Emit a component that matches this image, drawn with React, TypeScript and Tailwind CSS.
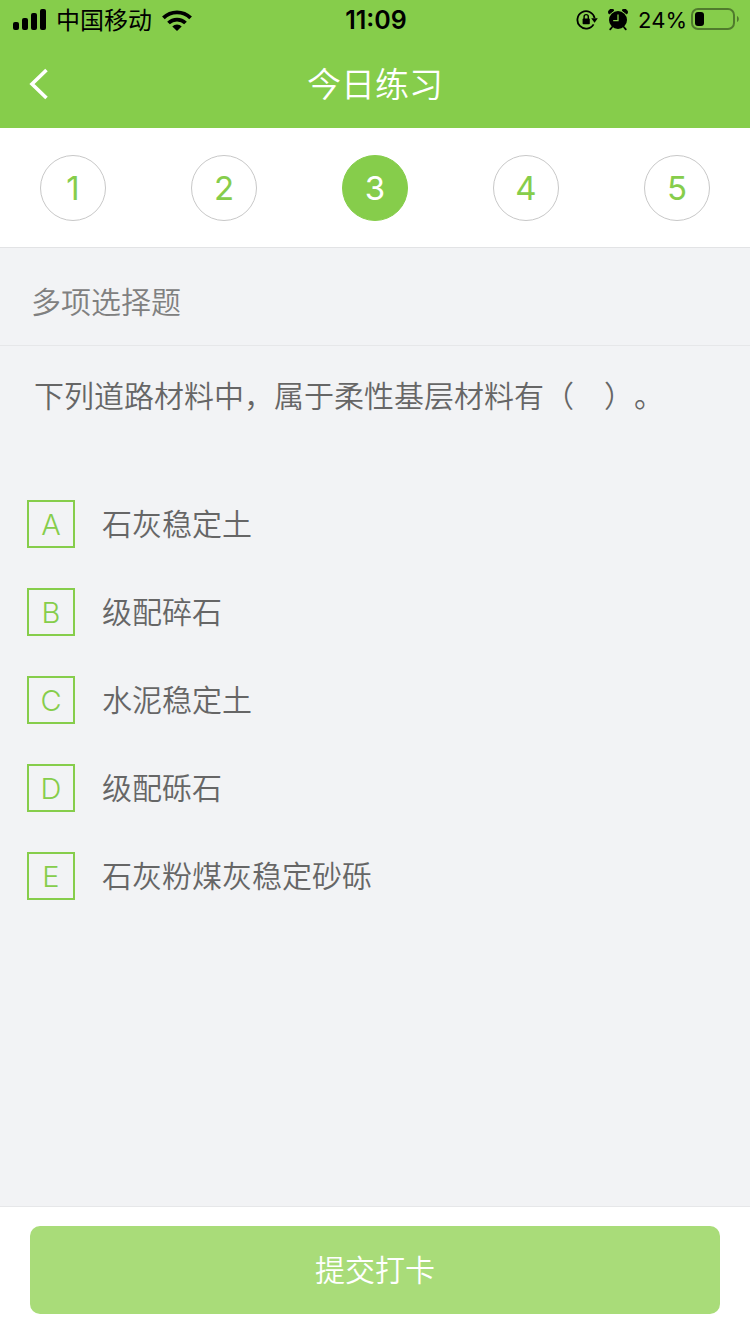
import React from 'react'
import clsx from 'clsx'

type Option = {
  key: string
  label: string
}

const questions = [1, 2, 3, 4, 5]

const options: Option[] = [
  { key: 'A', label: '石灰稳定土' },
  { key: 'B', label: '级配碎石' },
  { key: 'C', label: '水泥稳定土' },
  { key: 'D', label: '级配砾石' },
  { key: 'E', label: '石灰粉煤灰稳定砂砾' },
]

function SignalIcon() {
  return (
    <svg className="h-6 w-[33px]" viewBox="0 0 33 24" fill="currentColor" aria-hidden="true">
      <rect x="0" y="13" width="6" height="8" rx="2" />
      <rect x="9" y="9" width="6" height="12" rx="2" />
      <rect x="18" y="4" width="6" height="17" rx="2" />
      <rect x="27" y="0" width="6" height="21" rx="2" />
    </svg>
  )
}

function WifiIcon() {
  return (
    <svg className="h-[22px] w-[30px]" viewBox="0 0 30 22" fill="none" stroke="currentColor" strokeWidth="3.8" aria-hidden="true">
      <path d="M1.4 7.9a19.4 19.4 0 0 1 27.2 0" />
      <path d="M6.5 13a12.2 12.2 0 0 1 17 0" />
      <path d="M15 21.1l-4.7-4.7a6.8 6.8 0 0 1 9.4 0z" fill="currentColor" stroke="none" />
    </svg>
  )
}

function RotationLockIcon() {
  return (
    <svg className="h-[22px] w-[22px]" viewBox="0 0 22 22" fill="none" stroke="currentColor" aria-hidden="true">
      <path d="M17.6 15.4A8.7 8.7 0 1 1 18.6 9" strokeWidth="1.8" />
      <path d="M15.2 9.2h6.6l-3.2 4.6z" fill="currentColor" stroke="none" />
      <rect x="6.6" y="9.6" width="7.2" height="5.6" rx="0.8" fill="currentColor" stroke="none" />
      <path d="M8.1 10V7.7a2.1 2.1 0 0 1 4.2 0V10" strokeWidth="1.4" />
    </svg>
  )
}

function AlarmIcon() {
  return (
    <svg className="h-[22px] w-5" viewBox="0 0 20 22" fill="none" stroke="currentColor" aria-hidden="true">
      <circle cx="10" cy="11" r="9" fill="currentColor" stroke="none" />
      <path d="M1.2 5a3 3 0 0 1 4.8-3.7zM18.8 5a3 3 0 0 0-4.8-3.7z" fill="currentColor" strokeWidth="1" />
      <path d="M4 18.2l-1.8 2.2M16 18.2l1.8 2.2" strokeWidth="1.8" strokeLinecap="round" />
      <path d="M10 5.4v6.2H5.2" stroke="#86cd4b" strokeWidth="1.3" />
    </svg>
  )
}

function BatteryIcon() {
  return (
    <svg className="h-6 w-12" viewBox="0 0 48 24" fill="none" aria-hidden="true">
      <rect x="1" y="1" width="42" height="20" rx="6" stroke="#000" strokeOpacity="0.4" strokeWidth="2" />
      <rect x="4" y="4" width="9" height="14" rx="3" fill="#000" />
      <path d="M46 8c2.4.8 2.4 5.2 0 6z" fill="#000" fillOpacity="0.4" />
    </svg>
  )
}

function StatusBar() {
  return (
    <div className="grid h-10 grid-cols-[1fr_auto_1fr] items-center pt-px pl-[13px] pr-[11px] text-2xl text-black">
      <div className="flex items-center gap-2.5">
        <SignalIcon />
        <span>中国移动</span>
        <WifiIcon />
      </div>
      <span className="text-[25px] font-semibold">11:09</span>
      <div className="flex items-center justify-end">
        <RotationLockIcon />
        <span className="mx-2.5">
          <AlarmIcon />
        </span>
        <span className="mr-1 text-[22px]">24%</span>
        <BatteryIcon />
      </div>
    </div>
  )
}

export default function App() {
  const [current, setCurrent] = React.useState(3)
  const [picked, setPicked] = React.useState<string[]>([])

  const toggle = (key: string) => {
    setPicked((prev) => (prev.includes(key) ? prev.filter((k) => k !== key) : [...prev, key]))
  }

  return (
    <div className="flex min-h-screen flex-col bg-[#f2f3f5] font-[Inter,'Noto_Sans_CJK_SC',sans-serif] text-[#666] [text-spacing-trim:space-all]">
      <header className="bg-[#86cd4b]">
        <StatusBar />
        <div className="grid h-22 grid-cols-[1fr_auto_1fr] items-center px-7 text-white">
          <button type="button" aria-label="返回" className="w-fit">
            <svg className="h-8 w-6" viewBox="0 0 24 32" fill="none" stroke="currentColor" strokeWidth="3.6" aria-hidden="true">
              <path d="M18.5 2L4 16l14.5 14" />
            </svg>
          </button>
          <h1 className="text-[34px] font-[350]">今日练习</h1>
        </div>
      </header>

      <nav className="flex h-30 items-center justify-between border-b border-[#e2e3e5] bg-white px-10">
        {questions.map((n) => (
          <button
            key={n}
            type="button"
            onClick={() => setCurrent(n)}
            aria-current={n === current ? 'step' : undefined}
            className={clsx(
              'h-[66px] w-[66px] rounded-full border pt-0.5 text-[33px]',
              n === current ? 'border-[#86cd4b] bg-[#86cd4b] text-white' : 'border-[#c8c8c8] bg-white text-[#86cd4b]',
            )}
          >
            {n}
          </button>
        ))}
      </nav>

      <main className="flex-1 text-[30px] font-[350]">
        <h2 className="flex h-[98px] items-center border-b border-[#e6e7e9] px-[31px] pt-3 text-[#808080]">多项选择题</h2>
        <fieldset>
          <legend className="px-[34px] pt-7 leading-[45px]">下列道路材料中，属于柔性基层材料有（　）。</legend>
          <div className="flex flex-col gap-10 px-[27px] pt-[81px] pb-10">
            {options.map((option) => (
              <label key={option.key} className="flex cursor-pointer items-center gap-[27px]">
                <span className="grid h-12 w-12 shrink-0">
                  <input
                    type="checkbox"
                    checked={picked.includes(option.key)}
                    onChange={() => toggle(option.key)}
                    className="peer col-start-1 row-start-1 h-12 w-12 appearance-none border-2 border-[#86cd4b] checked:bg-[#86cd4b]"
                  />
                  <span className="col-start-1 row-start-1 place-self-center pt-0.5 text-[29px] text-[#86cd4b] peer-checked:text-white">
                    {option.key}
                  </span>
                </span>
                <span>{option.label}</span>
              </label>
            ))}
          </div>
        </fieldset>
      </main>

      <footer className="border-t border-[#e6e7e9] bg-white px-[30px] pt-[19px] pb-5">
        <button type="button" className="h-22 w-full rounded-[10px] bg-[#a9dc79] text-[30px] font-[350] text-white">
          提交打卡
        </button>
      </footer>
    </div>
  )
}
